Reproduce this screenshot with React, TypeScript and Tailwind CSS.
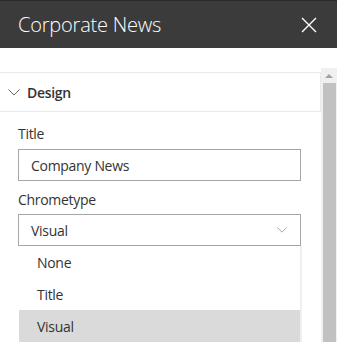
import React from 'react';

const font = { fontFamily: '"Segoe UI", "Open Sans", "Liberation Sans", sans-serif' };

const Chevron: React.FC<{ className?: string }> = ({ className }) => (
  <svg viewBox="0 0 12 7" className={className} fill="none" stroke="currentColor" strokeWidth="1">
    <path d="M0.5 0.5 L6 6 L11.5 0.5" />
  </svg>
);

export default function App() {
  const options = ['None', 'Title', 'Visual'];
  const selected = 'Visual';

  return (
    <div className="w-[337px] h-[342px] overflow-hidden bg-white flex flex-col text-[#333333]" style={font}>
      {/* Panel header */}
      <div className="h-[48px] shrink-0 bg-[#3b3b3b] border-t border-[#2a2a2a] flex items-center justify-between pl-[18px] pr-[20px]">
        <h1 className="text-[20px] font-light text-white tracking-[-0.2px]">Corporate News</h1>
        <svg viewBox="0 0 16 16" className="w-[16px] h-[16px] text-white" fill="none" stroke="currentColor" strokeWidth="1.4">
          <path d="M1 1 L15 15 M15 1 L1 15" />
        </svg>
      </div>

      <div className="flex-1 flex min-h-0 text-[14px] tracking-[-0.3px]">
        {/* Property pane */}
        <div className="flex-1 pt-[24px] min-w-0">
          <div className="h-[40px] border-y border-r border-[#eaeaea] flex items-center pl-[8px] gap-[7px]">
            <Chevron className="w-[12px] h-[7px] text-[#666666]" />
            <span className="font-semibold">Design</span>
          </div>

          <div className="pl-[18px] pr-[20px] pt-[12px]">
            <label className="block leading-[20px] mb-[5px]">Title</label>
            <div className="h-[32px] border border-[#a6a6a6] flex items-center px-[12px]">
              Company News
            </div>

            <label className="block leading-[20px] mt-[9px] mb-[4px]">Chrometype</label>
            <div className="h-[32px] border border-[#a6a6a6] flex items-center justify-between pl-[12px] pr-[12px]">
              <span>Visual</span>
              <Chevron className="w-[12px] h-[6px] text-[#999999]" />
            </div>

            {/* Open dropdown */}
            <div className="ml-[1px] mr-[-1px] border-r-[2px] border-[#f0f0f0] bg-white">
              {options.map((o) => (
                <div
                  key={o}
                  className={`h-[32px] flex items-center pl-[18px] ${o === selected ? 'bg-[#dadada]' : ''}`}
                >
                  {o}
                </div>
              ))}
            </div>
          </div>
        </div>

        {/* Scrollbar */}
        <div className="w-[16px] shrink-0 pt-[20px] flex flex-col">
          <div className="flex-1 bg-[#f0f0f0] flex flex-col">
            <div className="h-[15px] flex items-center justify-center">
              <svg viewBox="0 0 8 4" className="w-[8px] h-[4px]">
                <path d="M0 4 L4 0 L8 4 Z" fill="#a3a3a3" />
              </svg>
            </div>
            <div className="flex-1 bg-[#c1c1c1] ml-[2px] mr-[1px]" />
          </div>
        </div>
      </div>
    </div>
  );
}
